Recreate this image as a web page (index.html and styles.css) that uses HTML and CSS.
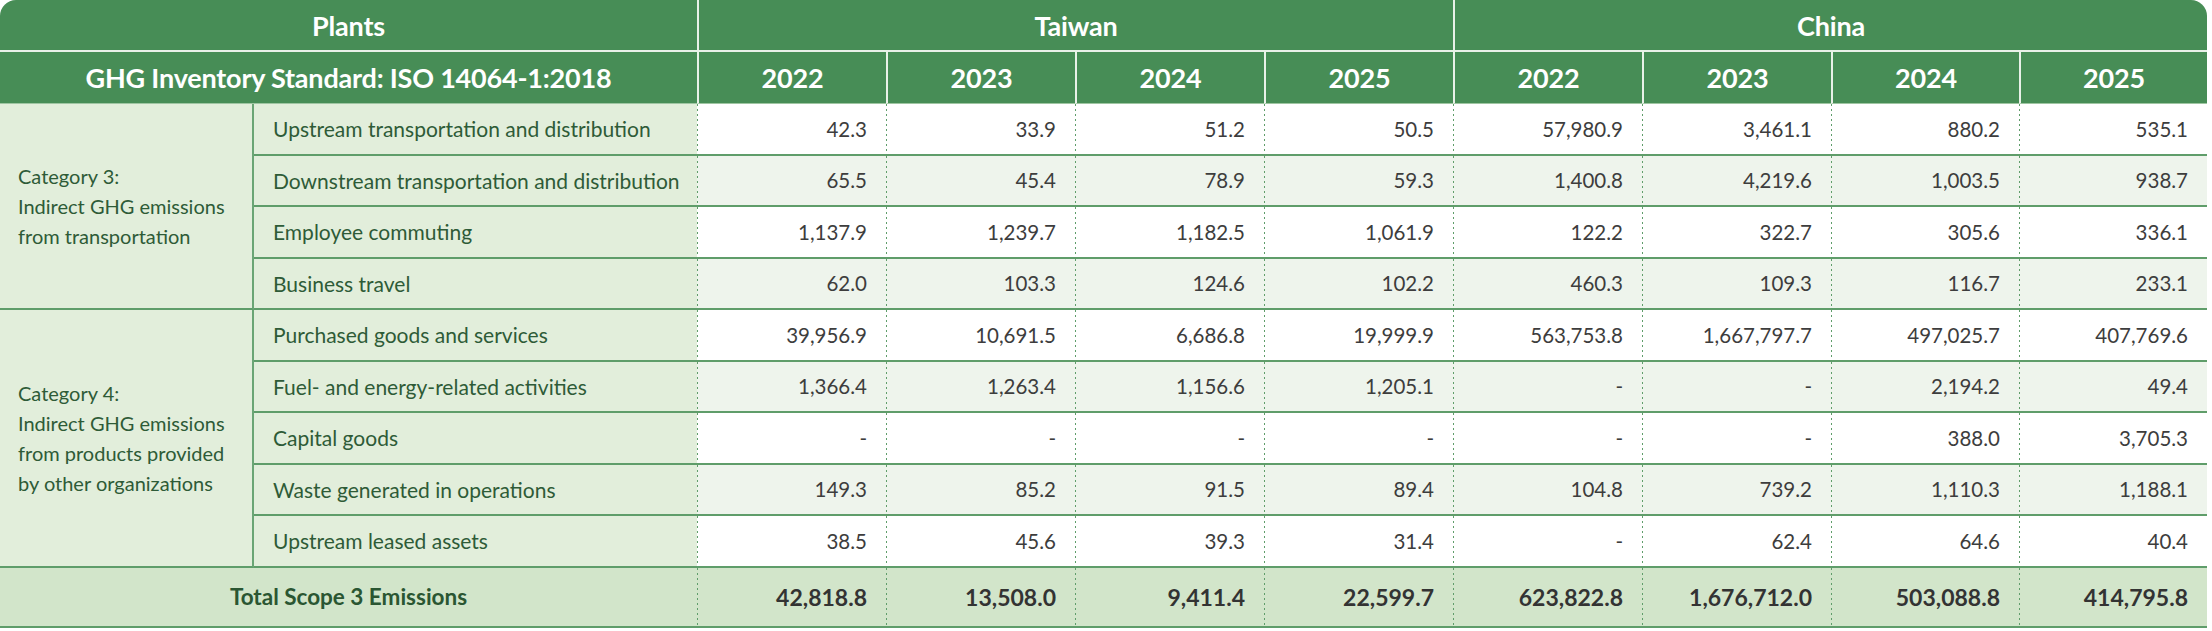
FILE: index.html
```html
<!DOCTYPE html>
<html lang="en">
<head>
<meta charset="utf-8">
<title>Scope 3 GHG Emissions</title>
<link rel="stylesheet" href="styles.css">
</head>
<body>
<table class="ghg">
  <colgroup>
    <col class="c-cat"><col class="c-item">
    <col class="c-yr"><col class="c-yr"><col class="c-yr"><col class="c-yr">
    <col class="c-yr"><col class="c-yr"><col class="c-yr2"><col class="c-yr2">
  </colgroup>
  <thead>
    <tr class="h1">
      <th colspan="2" class="corner-l">Plants</th>
      <th colspan="4" class="sep">Taiwan</th>
      <th colspan="4" class="sep corner-r">China</th>
    </tr>
    <tr class="h2">
      <th colspan="2">GHG Inventory Standard: ISO 14064-1:2018</th>
      <th class="sep">2022</th><th class="sep">2023</th><th class="sep">2024</th><th class="sep">2025</th>
      <th class="sep">2022</th><th class="sep">2023</th><th class="sep">2024</th><th class="sep">2025</th>
    </tr>
  </thead>
  <tbody>
    <tr class="odd">
      <td class="cat" rowspan="4">Category 3:<br>Indirect GHG emissions<br>from transportation</td>
      <td class="item">Upstream transportation and distribution</td>
      <td class="num">42.3</td><td class="num">33.9</td><td class="num">51.2</td><td class="num">50.5</td>
      <td class="num">57,980.9</td><td class="num">3,461.1</td><td class="num">880.2</td><td class="num">535.1</td>
    </tr>
    <tr class="even">
      <td class="item">Downstream transportation and distribution</td>
      <td class="num">65.5</td><td class="num">45.4</td><td class="num">78.9</td><td class="num">59.3</td>
      <td class="num">1,400.8</td><td class="num">4,219.6</td><td class="num">1,003.5</td><td class="num">938.7</td>
    </tr>
    <tr class="odd">
      <td class="item">Employee commuting</td>
      <td class="num">1,137.9</td><td class="num">1,239.7</td><td class="num">1,182.5</td><td class="num">1,061.9</td>
      <td class="num">122.2</td><td class="num">322.7</td><td class="num">305.6</td><td class="num">336.1</td>
    </tr>
    <tr class="even">
      <td class="item">Business travel</td>
      <td class="num">62.0</td><td class="num">103.3</td><td class="num">124.6</td><td class="num">102.2</td>
      <td class="num">460.3</td><td class="num">109.3</td><td class="num">116.7</td><td class="num">233.1</td>
    </tr>
    <tr class="odd">
      <td class="cat" rowspan="5">Category 4:<br>Indirect GHG emissions<br>from products provided<br>by other organizations</td>
      <td class="item">Purchased goods and services</td>
      <td class="num">39,956.9</td><td class="num">10,691.5</td><td class="num">6,686.8</td><td class="num">19,999.9</td>
      <td class="num">563,753.8</td><td class="num">1,667,797.7</td><td class="num">497,025.7</td><td class="num">407,769.6</td>
    </tr>
    <tr class="even">
      <td class="item">Fuel- and energy-related activities</td>
      <td class="num">1,366.4</td><td class="num">1,263.4</td><td class="num">1,156.6</td><td class="num">1,205.1</td>
      <td class="num">-</td><td class="num">-</td><td class="num">2,194.2</td><td class="num">49.4</td>
    </tr>
    <tr class="odd">
      <td class="item">Capital goods</td>
      <td class="num">-</td><td class="num">-</td><td class="num">-</td><td class="num">-</td>
      <td class="num">-</td><td class="num">-</td><td class="num">388.0</td><td class="num">3,705.3</td>
    </tr>
    <tr class="even">
      <td class="item">Waste generated in operations</td>
      <td class="num">149.3</td><td class="num">85.2</td><td class="num">91.5</td><td class="num">89.4</td>
      <td class="num">104.8</td><td class="num">739.2</td><td class="num">1,110.3</td><td class="num">1,188.1</td>
    </tr>
    <tr class="odd">
      <td class="item">Upstream leased assets</td>
      <td class="num">38.5</td><td class="num">45.6</td><td class="num">39.3</td><td class="num">31.4</td>
      <td class="num">-</td><td class="num">62.4</td><td class="num">64.6</td><td class="num">40.4</td>
    </tr>
  </tbody>
  <tfoot>
    <tr class="total">
      <td colspan="2" class="total-label">Total Scope 3 Emissions</td>
      <td class="num">42,818.8</td><td class="num">13,508.0</td><td class="num">9,411.4</td><td class="num">22,599.7</td>
      <td class="num">623,822.8</td><td class="num">1,676,712.0</td><td class="num">503,088.8</td><td class="num">414,795.8</td>
    </tr>
  </tfoot>
</table>
</body>
</html>
```

FILE: styles.css
```css
html, body {
  margin: 0;
  padding: 0;
  background: #ffffff;
}

.ghg {
  border-collapse: separate;
  border-spacing: 0;
  table-layout: fixed;
  width: 2207px;
  font-family: Lato, "Open Sans", "Liberation Sans", sans-serif;
}

.c-cat { width: 254px; }
.c-item { width: 443px; }
.c-yr { width: 189px; }
.c-yr2 { width: 188px; }

.ghg th,
.ghg td {
  box-sizing: border-box;
  padding: 0;
  vertical-align: middle;
}

/* header */
.ghg th {
  background-color: #478d56;
  color: #ffffff;
  font-weight: 700;
  font-size: 27px;
  text-align: center;
  letter-spacing: -0.2px;
}

.h1 th {
  height: 52px;
  border-bottom: 2px solid #e9f1e8;
}

.h2 th {
  height: 52px;
  border-bottom: 1px solid #9fc6a2;
}

.ghg th.sep {
  border-left: 2px solid #e9f1e8;
}

.corner-l { border-top-left-radius: 16px; }
.corner-r { border-top-right-radius: 16px; }

/* body */
.ghg tbody td {
  height: 51.5px;
  border-bottom: 2px solid #5f9d6a;
  font-size: 20.5px;
}

.ghg tbody td.cat {
  background-color: #e2eedb;
  color: #2e5b37;
  font-size: 20px;
  padding-left: 18px;
  line-height: 30px;
  border-right: 2px solid #6aa575;
  white-space: nowrap;
}

.ghg tbody td.item {
  background-color: #e2eedb;
  color: #2e5b37;
  font-size: 21px;
  padding-left: 19px;
  white-space: nowrap;
}

.ghg td.num {
  text-align: right;
  padding-right: 19px;
  color: #3d3d3d;
  white-space: nowrap;
  background-image: repeating-linear-gradient(to bottom, #5f9d6a 0, #5f9d6a 2px, transparent 2px, transparent 5px);
  background-size: 1px 100%;
  background-repeat: no-repeat;
  background-position: left top;
}

.odd .num { background-color: #ffffff; }
.even .num { background-color: #eef4ec; }

/* total */
.ghg .total td {
  height: 60px;
  background-color: #d2e5ca;
  border-bottom: 2px solid #5f9d6a;
  font-weight: 700;
  font-size: 23px;
}

.ghg .total td.num {
  color: #333333;
}

.ghg .total td.total-label {
  text-align: center;
  color: #2a5632;
  font-size: 22.5px;
}
```
